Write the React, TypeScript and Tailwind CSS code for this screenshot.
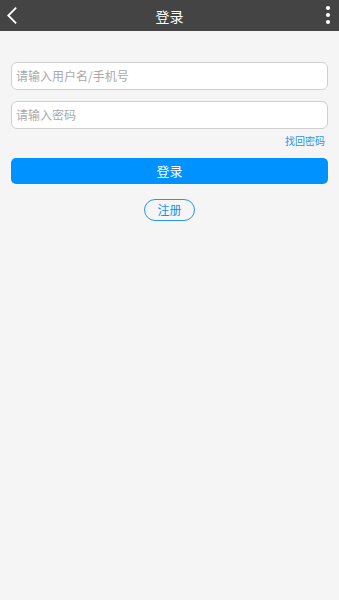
import React from "react";

export default function App() {
  const font = { fontFamily: '"Noto Sans CJK SC", "Liberation Sans", sans-serif' };
  return (
    <div className="w-[339px] h-[600px] bg-[#f5f5f5] flex flex-col" style={font}>
      <div className="h-[31px] bg-[#444444] flex items-center justify-between relative">
        <svg width="20" height="31" viewBox="0 0 20 31">
          <path d="M15.5 8.3 L8.3 15.5 L15.5 22.7" stroke="white" strokeWidth="1.8" fill="none" strokeLinecap="square" />
        </svg>
        <span className="absolute left-1/2 -translate-x-1/2 text-white text-[14px] leading-none">登录</span>
        <svg width="8" height="31" viewBox="0 0 8 31" className="mr-[7px]">
          <circle cx="4" cy="8" r="2.1" fill="white" />
          <circle cx="4" cy="15" r="2.1" fill="white" />
          <circle cx="4" cy="22" r="2.1" fill="white" />
        </svg>
      </div>
      <div className="flex flex-col px-[11px] pt-[31px]">
        <div className="h-[28px] bg-white border border-[#cfcfcf] rounded-[6px] flex items-center pl-[4px] text-[12px] text-[#a9a9a9]">
          请输入用户名/手机号
        </div>
        <div className="h-[28px] mt-[11px] bg-white border border-[#cfcfcf] rounded-[6px] flex items-center pl-[4px] text-[12px] text-[#a9a9a9]">
          请输入密码
        </div>
        <div className="flex justify-end mt-[7px] pr-[3px] h-[10px] items-center text-[10px] text-[#2a93ec] leading-none">
          找回密码
        </div>
        <div className="h-[26px] mt-[12px] bg-[#0093ff] rounded-[5px] flex items-center justify-center text-white text-[13px]">
          登录
        </div>
        <div className="flex justify-center mt-[15px]">
          <div className="w-[51px] h-[22px] border border-[#2895f0] rounded-full flex items-center justify-center text-[12px] text-[#1a8fe6]">
            注册
          </div>
        </div>
      </div>
    </div>
  );
}
